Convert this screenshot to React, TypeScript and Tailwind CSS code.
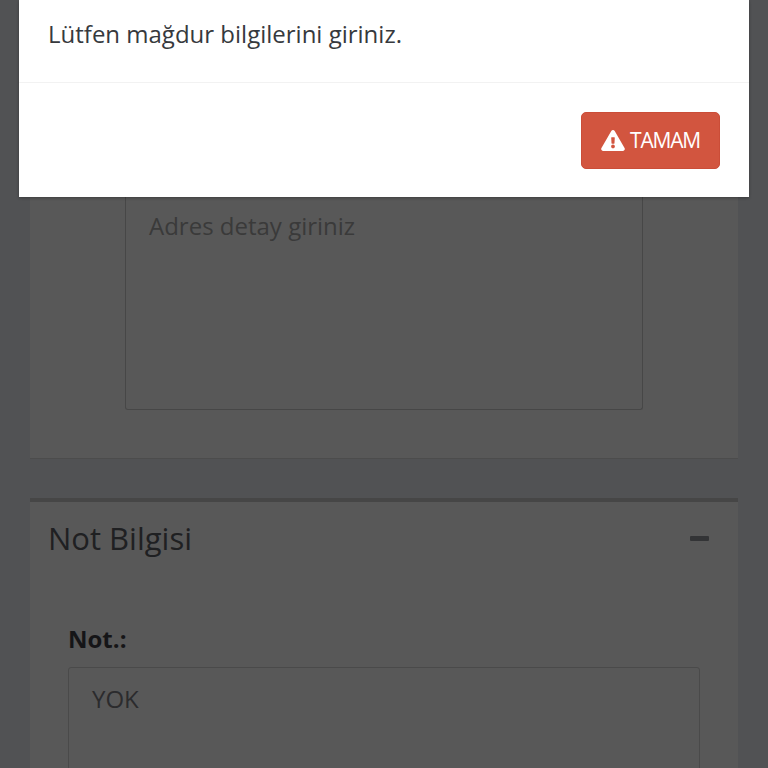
const font = "font-['Open_Sans','Noto_Sans',sans-serif]";

function TriangleIcon() {
  return (
    <svg viewBox="0 0 576 512" className="h-[21px] w-[24px] shrink-0" fill="#ffffff" aria-hidden="true">
      <path d="M569.5 440C588 472 565 512 528 512H48C11 512-12 472 6.500 440L246.400 24C264.900-8 311.100-8 329.600 24L569.500 440zM288 354c-25.400 0-46 20.600-46 46s20.600 46 46 46 46-20.600 46-46-20.600-46-46-46zM244.300 188.700l7.400 136c.300 6.400 5.600 11.300 12 11.300h48.500c6.400 0 11.700-5 12-11.300l7.400-136c.300-6.900-5.200-12.700-12-12.700h-63.800c-6.900 0-12.300 5.800-12 12.700z" />
    </svg>
  );
}

export default function App() {
  return (
    <div className={`relative h-[768px] w-[768px] overflow-hidden bg-[#515254] ${font}`}>
      <div className="flex flex-col px-[30px]">
        <section className="h-[459px] border-b border-[#4c4c4c] bg-[#585858] pl-[95px] pr-[95px] pt-[197px]">
          <div className="h-[213px] rounded-b-[3px] border-x border-b border-[#474747] pl-[23px] pr-[24px] pt-[13px] text-[24px] leading-[32px] text-[#3a3a3a]">
            Adres detay giriniz
          </div>
        </section>
        <section className="mt-[39px] h-[300px] border-t-[4px] border-[#464646] bg-[#585858]">
          <div className="flex items-center justify-between pl-[18px] pr-[29px] pt-[16px]">
            <h2 className="text-[31px] font-normal leading-[40px] text-[#1f2022]">Not Bilgisi</h2>
            <span className="h-[5px] w-[19px] rounded-[1px] bg-[#333436]" />
          </div>
          <div className="px-[38px] pt-[65px]">
            <label className="block text-[24px] font-bold leading-[32px] text-[#151517]">Not.:</label>
            <div className="mt-[12px] h-[200px] rounded-t-[3px] border border-[#4a4a4a] px-[23px] pt-[15px] text-[24px] leading-[32px] text-[#2b2b2d]">
              YOK
            </div>
          </div>
        </section>
      </div>

      <div className="absolute left-[19px] top-0 h-[197px] w-[730px] bg-white shadow-[0_1px_3px_rgba(0,0,0,0.3)]">
        <div className="flex h-[83px] items-start border-b border-[#f2f2f2] pl-[29px] pt-[17px] text-[24px] leading-[34px] text-[#36393d]">
          Lütfen mağdur bilgilerini giriniz.
        </div>
        <div className="flex justify-end pr-[29px] pt-[29px]">
          <button className="flex h-[57px] w-[139px] items-center justify-center gap-[5px] rounded-[5px] border border-[#cb4d38] bg-[#d2553f] text-[21px] tracking-[-1.2px] text-white">
            <TriangleIcon />
            <span>TAMAM</span>
          </button>
        </div>
      </div>
    </div>
  );
}
